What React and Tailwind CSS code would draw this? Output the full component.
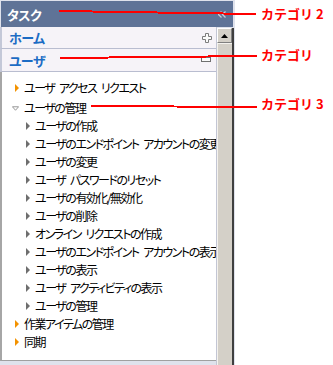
import React from "react";

const jp = { fontFamily: '"Noto Sans CJK JP", "Noto Sans", sans-serif' };

// en space keeps the gaps visible under the tight tracking
const sp = "\u2002";

const tree = [
  { level: 0, kind: "closed", text: `ユーザ${sp}アクセス${sp}リクエスト` },
  { level: 0, kind: "open", text: "ユーザの管理", mt: true },
  { level: 1, text: "ユーザの作成" },
  { level: 1, text: `ユーザのエンドポイント${sp}アカウントの変更` },
  { level: 1, text: "ユーザの変更" },
  { level: 1, text: `ユーザ${sp}パスワードのリセット` },
  { level: 1, text: "ユーザの有効化/無効化" },
  { level: 1, text: "ユーザの削除" },
  { level: 1, text: `オンライン${sp}リクエストの作成` },
  { level: 1, text: `ユーザのエンドポイント${sp}アカウントの表示` },
  { level: 1, text: "ユーザの表示" },
  { level: 1, text: `ユーザ${sp}アクティビティの表示` },
  { level: 1, text: "ユーザの管理" },
  { level: 0, kind: "closed", text: "作業アイテムの管理" },
  { level: 0, kind: "closed", text: "同期" },
];

const Arrow = ({ kind }) => {
  if (kind === "open") {
    return (
      <svg width="8" height="5" viewBox="0 0 8 5">
        <polygon points="0.5,0.5 7.5,0.5 4,4.5" fill="none" stroke="#8c8c8c" strokeWidth="1" />
      </svg>
    );
  }
  if (kind === "closed") {
    return (
      <svg width="4" height="8" viewBox="0 0 4 8">
        <polygon points="0,0 4,4 0,8" fill="#f39200" />
      </svg>
    );
  }
  return (
    <svg width="4" height="8" viewBox="0 0 4 8">
      <polygon points="0,0 4,4 0,8" fill="#6e6e6e" />
    </svg>
  );
};

const TreeRow = ({ item }) => (
  <div
    className={`flex items-center h-[18px] ${item.level === 0 ? "pl-[10px]" : "pl-[21px]"} ${item.mt ? "mt-[2px]" : ""}`}
  >
    <div className="w-[12px] flex justify-end pr-[5px] shrink-0">
      <Arrow kind={item.kind} />
    </div>
    <span className="text-[12px] leading-none tracking-[-1.5px] text-black whitespace-nowrap [font-feature-settings:'palt']">
      {item.text}
    </span>
  </div>
);

const PlusIcon = () => (
  <svg width="10" height="10" viewBox="0 0 10 10">
    <path
      d="M3.5 0.5h3v3h3v3h-3v3h-3v-3h-3v-3h3z"
      fill="#fbfbfb"
      stroke="#7c7c7c"
      strokeWidth="1"
    />
  </svg>
);

const MinusIcon = () => (
  <svg width="10" height="6" viewBox="0 0 10 6">
    <rect x="0.5" y="0.5" width="9" height="4" fill="#fbfbfb" stroke="#707070" strokeWidth="1" />
  </svg>
);

const Annotations = () => (
  <>
    <svg className="absolute left-0 top-0 pointer-events-none" width="333" height="365" shapeRendering="crispEdges">
      <line x1="59" y1="11" x2="256" y2="14" stroke="#ff0000" strokeWidth="2" />
      <line x1="60" y1="58" x2="257" y2="56" stroke="#ff0000" strokeWidth="2" />
      <line x1="91" y1="106" x2="257" y2="107" stroke="#ff0000" strokeWidth="2" />
    </svg>
    <span className="absolute left-[261px] top-[7px] text-[13px] leading-[14px] font-bold text-[#ff0000] whitespace-nowrap">
      カテゴリ 2
    </span>
    <span className="absolute left-[261px] top-[48px] text-[13px] leading-[14px] font-bold text-[#ff0000] whitespace-nowrap">
      カテゴリ
    </span>
    <span className="absolute left-[261px] top-[97px] text-[13px] leading-[14px] font-bold text-[#ff0000] whitespace-nowrap">
      カテゴリ 3
    </span>
  </>
);

export default function App() {
  return (
    <div className="relative w-[333px] h-[365px] bg-white overflow-hidden" style={jp}>
      <div className="w-[235px] h-[365px] bg-[#dfe2ec] flex flex-col">
        {/* header */}
        <div className="mt-[1px] ml-[1px] mr-[2px] h-[26px] bg-[#5f7397] flex items-center justify-between pl-[6px] pr-[7px]">
          <span className="text-white font-bold text-[13px] leading-none tracking-[-0.5px] [font-feature-settings:'palt']">タスク</span>
          <svg width="8" height="7" viewBox="0 0 8 7">
            <path d="M3.5 0.5L0.5 3.5L3.5 6.5M7.5 0.5L4.5 3.5L7.5 6.5" fill="none" stroke="#c9ccd6" strokeWidth="1.3" />
          </svg>
        </div>

        <div className="flex flex-1 min-h-0">
          {/* left column */}
          <div className="w-[217px] flex flex-col border-r border-[#c3c6d4]">
            <div className="h-[22px] border-l-2 border-l-[#c4c8d8] border-b border-b-[#b9bdd0] bg-[#f6f3f8] flex items-center justify-between pl-[7px] pr-[4px]">
              <span className="text-[13px] font-bold leading-none tracking-[-0.5px] text-[#1c6cc4] [font-feature-settings:'palt']">ホーム</span>
              <PlusIcon />
            </div>
            <div className="h-[23px] border-l-2 border-l-[#c4c8d8] border-b border-b-[#b9bdd0] bg-[#f6f3f8] flex items-center justify-between pl-[7px] pr-[5px]">
              <span className="text-[13px] font-bold leading-none tracking-[-0.5px] text-[#1c6cc4] [font-feature-settings:'palt']">ユーザ</span>
              <MinusIcon />
            </div>
            <div className="h-[289px] bg-white border-l-2 border-l-[#a6a6a6] border-b border-b-[#a0a0a0] pt-[7px] overflow-hidden">
              {tree.map((item, i) => (
                <TreeRow key={i} item={item} />
              ))}
            </div>
          </div>

          {/* scrollbar */}
          <div className="w-[15px] mt-[1px] flex flex-col bg-[#d4d0c8]">
            <div className="h-[15px] bg-[#d4d0c8] border-t border-l border-t-white border-l-white border-b border-r border-b-[#808080] border-r-[#808080] flex items-center justify-center">
              <svg width="7" height="4" viewBox="0 0 7 4">
                <polygon points="3.5,0 7,4 0,4" fill="#000" />
              </svg>
            </div>
            <div className="flex-1 bg-[#d4d0c8] border-t border-l border-t-[#f4f2ee] border-l-[#f4f2ee]" />
          </div>
          <div className="w-[2px] mt-[1px] bg-[#3f3f3f]" />
        </div>
      </div>

      <Annotations />
    </div>
  );
}
